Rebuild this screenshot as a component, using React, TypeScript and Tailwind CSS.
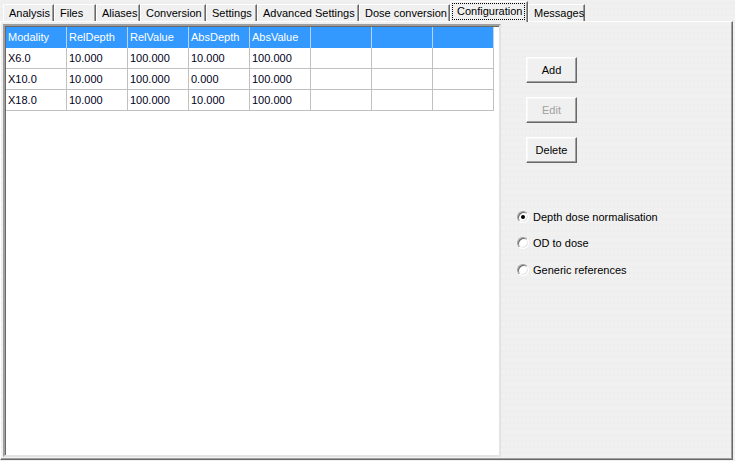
const tabs = [
  { label: "Analysis", w: "w-[51px]" },
  { label: "Files", w: "w-[42px]" },
  { label: "Aliases", w: "w-[44px]" },
  { label: "Conversion", w: "w-[66px]" },
  { label: "Settings", w: "w-[51px]" },
  { label: "Advanced Settings", w: "w-[102px]" },
  { label: "Dose conversion", w: "w-[91px]" },
  { label: "Configuration", w: "w-[78px]", active: true },
  { label: "Messages", w: "w-[57px]" },
];

const columns = ["Modality", "RelDepth", "RelValue", "AbsDepth", "AbsValue", "", "", ""];

const rows = [
  ["X6.0", "10.000", "100.000", "10.000", "100.000", "", "", ""],
  ["X10.0", "10.000", "100.000", "0.000", "100.000", "", "", ""],
  ["X18.0", "10.000", "100.000", "10.000", "100.000", "", "", ""],
];

const dots = "bg-[#f0f0f0] bg-[radial-gradient(circle,#e8e8e8_0.6px,transparent_0.8px)] bg-[length:4px_6px]";

function Button({ label, disabled }: { label: string; disabled?: boolean }) {
  return (
    <div
      className={`w-[51px] h-[26px] flex items-center justify-center bg-[#f0f0f0] border border-t-white border-l-white border-r-[#696969] border-b-[#696969] shadow-[inset_-1px_-1px_0_#a0a0a0,inset_1px_1px_0_#f8f8f8] ${
        disabled ? "text-[#a0a0a0]" : "text-black"
      }`}
    >
      {label}
    </div>
  );
}

function Radio({ label, checked }: { label: string; checked?: boolean }) {
  return (
    <div className="h-[16px] flex items-center gap-[4px]">
      <div className="w-[12px] h-[12px] rounded-full border border-t-[#a0a0a0] border-l-[#a0a0a0] border-r-white border-b-white bg-white flex items-center justify-center shadow-[inset_1px_1px_0_#696969,inset_-1px_-1px_0_#e3e3e3]">
        {checked && <div className="w-[4px] h-[4px] rounded-full bg-black" />}
      </div>
      <span>{label}</span>
    </div>
  );
}

export default function App() {
  return (
    <div
      className={`w-[735px] h-[461px] overflow-hidden text-[11px] leading-none text-black ${dots}`}
      style={{ fontFamily: '"Liberation Sans", Arial, sans-serif' }}
    >
      {/* Tab strip */}
      <div className="h-[21px] flex items-end pl-[3px]">
        {tabs.map((t) =>
          t.active ? (
            <div
              key={t.label}
              className={`${t.w} h-[21px] mb-[-1px] relative z-10 bg-[#f0f0f0] border-t border-l border-t-white border-l-white border-r border-r-[#696969] shadow-[inset_-1px_0_0_#a0a0a0] p-[1px] pr-[2px]`}
            >
              <div className="h-[17px] border border-dotted border-black flex items-center pl-[4px]">
                {t.label}
              </div>
            </div>
          ) : (
            <div
              key={t.label}
              className={`${t.w} h-[17px] flex items-center pl-[5px] pt-[1px] border-t border-l border-t-white border-l-white border-r border-r-[#696969] shadow-[inset_-1px_0_0_#a0a0a0] bg-[#f0f0f0]`}
            >
              {t.label}
            </div>
          )
        )}
      </div>

      {/* Panel */}
      <div className="w-[733px] h-[439px] flex border-t border-l border-t-white border-l-white border-r border-b border-r-[#696969] border-b-[#696969] shadow-[inset_-1px_-1px_0_#a0a0a0] pl-[2px] pt-[2px]">
        {/* Grid */}
        <div className="w-[498px] h-[433px] shrink-0 border-2 border-t-[#a0a0a0] border-l-[#a0a0a0] border-r-[#e3e3e3] border-b-[#e3e3e3] bg-white shadow-[inset_1px_1px_0_#696969]">
          <div className="flex pl-[1px] pt-[1px]">
            {columns.map((c, i) => (
              <div
                key={i}
                className="w-[61px] h-[21px] flex items-center pl-[2px] bg-[#3399ff] text-white border-r border-[#b8d4f5]"
              >
                {c}
              </div>
            ))}
          </div>
          {rows.map((r, ri) => (
            <div key={ri} className="flex pl-[1px]">
              {r.map((v, ci) => (
                <div
                  key={ci}
                  className="w-[61px] h-[21px] flex items-center pl-[2px] pt-[1px] border-r border-b border-[#c0c0c0] text-[#000020]"
                >
                  {v}
                </div>
              ))}
            </div>
          ))}
        </div>

        {/* Right side */}
        <div className="flex-1 flex flex-col pt-[33px]">
          <div className="flex flex-col gap-[14px] pl-[25px]">
            <Button label="Add" />
            <Button label="Edit" disabled />
            <Button label="Delete" />
          </div>
          <div className="flex flex-col pl-[16px] mt-[46px]">
            <Radio label="Depth dose normalisation" checked />
            <div className="mt-[10px]">
              <Radio label="OD to dose" />
            </div>
            <div className="mt-[11px]">
              <Radio label="Generic references" />
            </div>
          </div>
        </div>
      </div>
    </div>
  );
}
